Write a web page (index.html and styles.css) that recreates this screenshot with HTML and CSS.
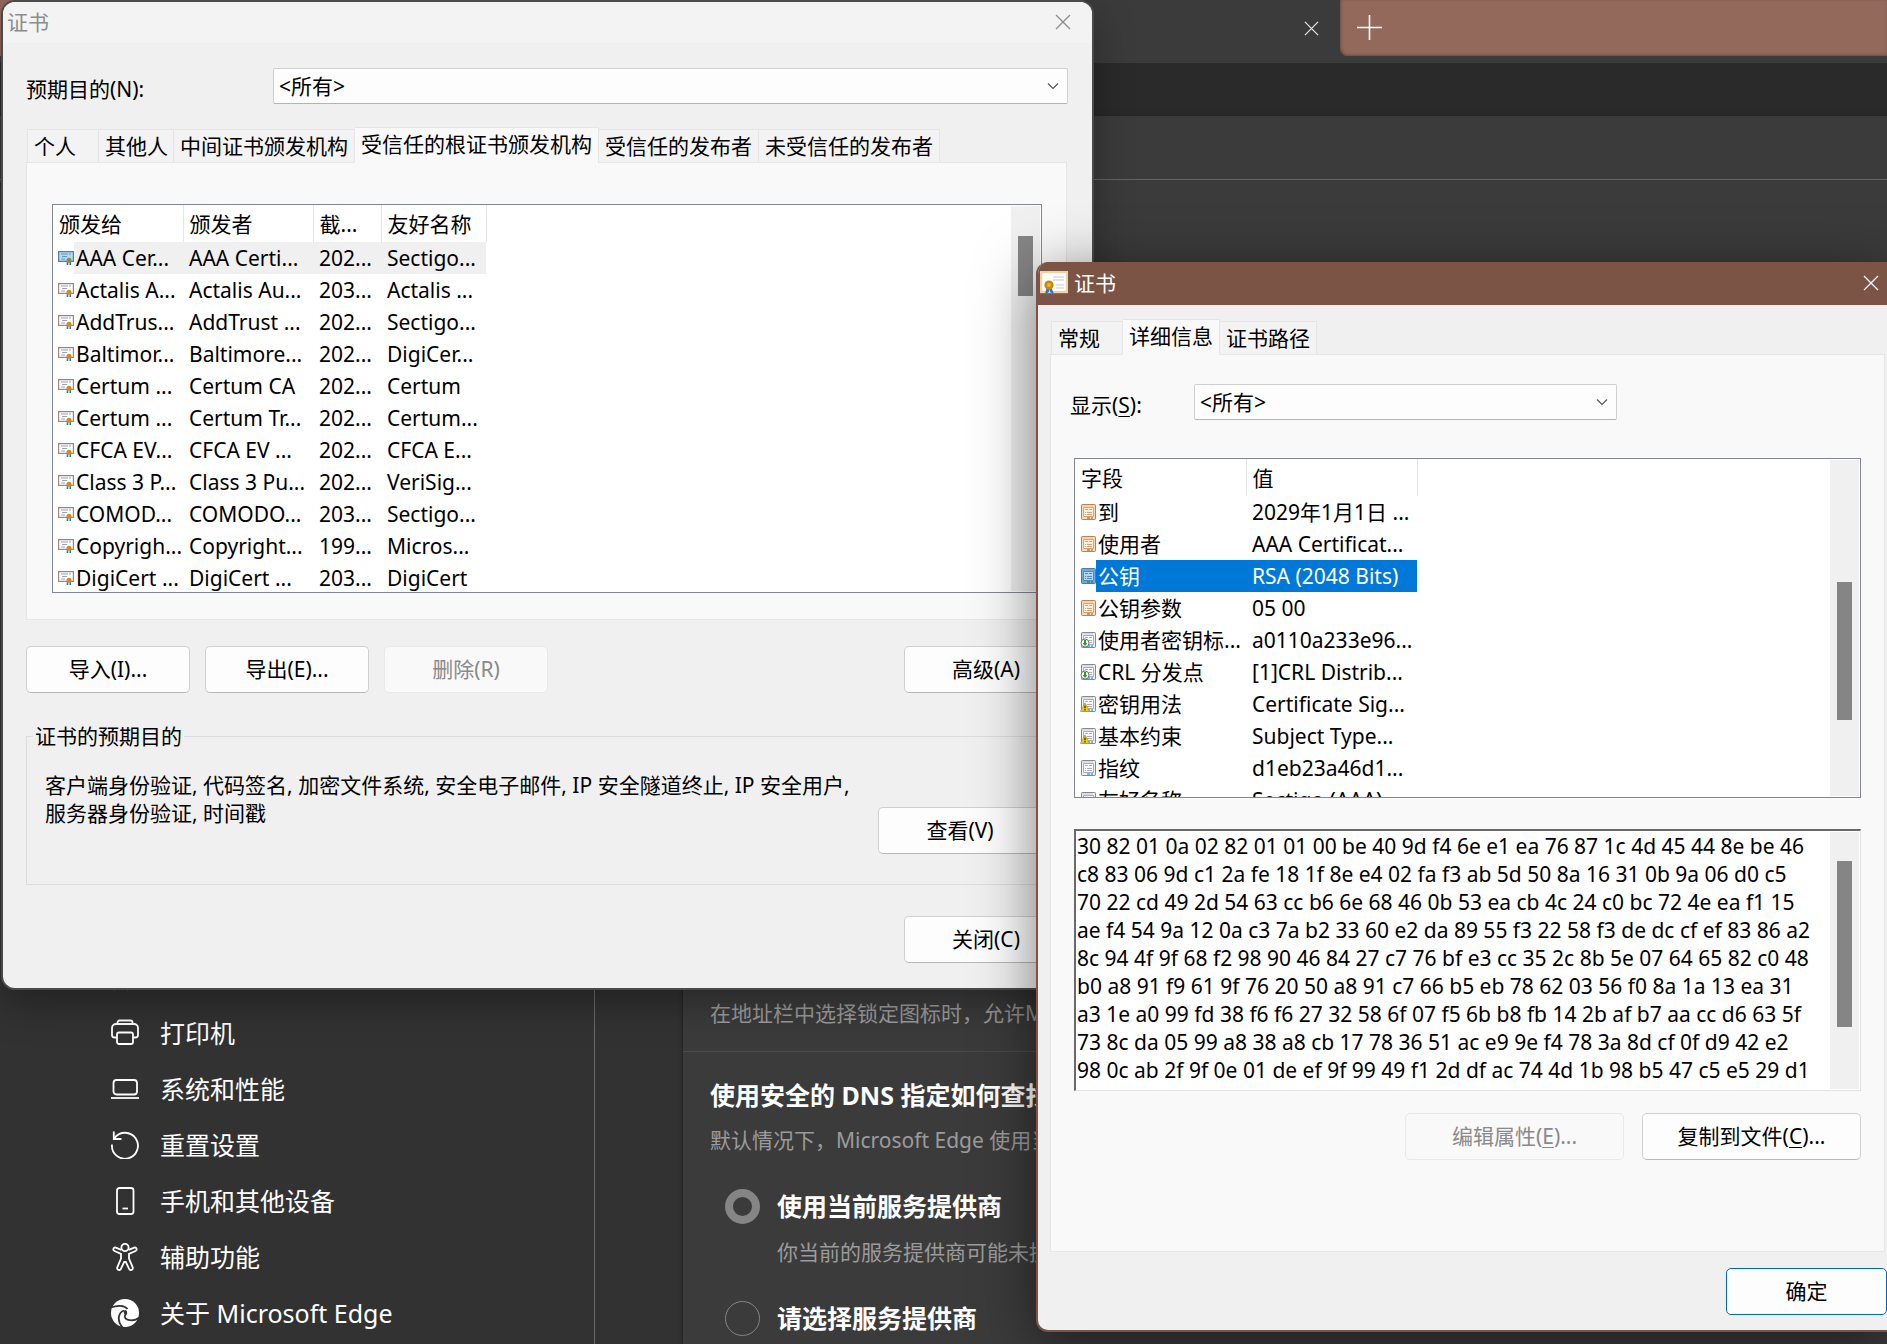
FILE: index.html
```html
<!DOCTYPE html>
<html lang="zh-CN">
<head>
<meta charset="utf-8">
<title>证书</title>
<link rel="stylesheet" href="styles.css">
</head>
<body>
<svg class="sprite" aria-hidden="true">
  <symbol id="i-close" viewBox="0 0 16 16"><path d="M1 1 15 15M15 1 1 15" fill="none" stroke="currentColor" stroke-width="1.3"/></symbol>
  <symbol id="i-chevron" viewBox="0 0 12 8"><path d="M1 1.500 6 6.500 11 1.500" fill="none" stroke="currentColor" stroke-width="1.200"/></symbol>
  <symbol id="i-cert" viewBox="0 0 16 14">
    <path d="M.6.6H15.400V10.400H.6Z" fill="#fff" stroke="#9a8a72" stroke-width="1.200"/>
    <path d="M3 3H10M11 3H13M4 5.500H9M3 8H7" stroke="#9a9ec8" stroke-width="1"/>
    <path d="M9.500 10.500V14M12.300 10.500V14" stroke="#3a6fd8" stroke-width="1.600"/>
    <circle cx="11" cy="9.200" r="2.500" fill="#c8920c"/>
  </symbol>
  <symbol id="i-cert-on" viewBox="0 0 16 14">
    <path d="M.6.6H15.400V10.400H.6Z" fill="#b3d9f6" stroke="#5a8198" stroke-width="1.200"/>
    <path d="M3 3H10M11 3H13M4 5.500H9M3 8H7" stroke="#6294c8" stroke-width="1"/>
    <path d="M9.500 10.500V14M12.300 10.500V14" stroke="#1f6bd0" stroke-width="1.600"/>
    <circle cx="11" cy="9.200" r="2.500" fill="#8d8f38"/>
  </symbol>
  <symbol id="i-field" viewBox="0 0 16 16">
    <rect x="1.500" y=".5" width="14" height="15" rx=".8" fill="var(--paper)" stroke="var(--edge)" stroke-width="1"/>
    <path d="M2 2H13" stroke="var(--bar)" stroke-width="1"/>
    <path d="M3.500 3.500H13.500V12.500H3.500Z" fill="#fff" fill-opacity=".5" stroke="var(--ink)" stroke-width="1"/>
    <path d="M5 5.500H8M9 5.500H12M5 8.500H6M7 8.500H12M5 10.500H6M7 10.500H12" stroke="var(--ink)" stroke-width="1"/>
    <path d="M7 14H10M11 14H13" stroke="var(--dot)" stroke-width="1.300"/>
  </symbol>
  <symbol id="i-down" viewBox="0 0 16 16"><use href="#i-field"/><circle cx="5" cy="11" r="4" fill="#fff" stroke="#6c7a70" stroke-width="1"/><path d="M5 8V12" stroke="#2e9a20" stroke-width="2"/><path d="M2.600 11H7.400L5 14Z" fill="#2e9a20"/></symbol>
  <symbol id="i-warn" viewBox="0 0 16 16"><use href="#i-field"/><path d="M5 7 9.500 15.400H.5Z" fill="#f2cf18" stroke="#b59a10" stroke-width=".8"/><path d="M5 9.500V12.300M5 13V14.400" stroke="#3a3000" stroke-width="1.300"/></symbol>
</svg>

<div class="browser">
  <header class="chrome">
    <div class="tabstrip">
      <div class="tab"><button class="tab-btn" aria-label="关闭标签页"><svg width="15" height="15"><use href="#i-close"/></svg></button></div>
      <div class="strip"><button class="tab-btn" aria-label="新建标签页"><svg width="25" height="25" viewBox="0 0 25 25"><path d="M12.500 0V25M0 12.500H25" stroke="#fff" stroke-width="1.600"/></svg></button></div>
    </div>
    <div class="toolbar"></div>
    <div class="bookmarks"></div>
  </header>
  <main class="settings">
    <nav class="sidebar">
      <a href="#lang"><svg class="nav-icon" viewBox="0 0 28 28"><path d="M3 27 10 6 17 27M5 19H15M17 4H27"/></svg>语言</a>
      <a href="#print"><svg class="nav-icon" viewBox="0 0 28 28"><path d="M6 18.500H3.500a2.500 2.500 0 0 1-2.500-2.500V9a4 4 0 0 1 4-4H23a4 4 0 0 1 4 4v7a2.500 2.500 0 0 1-2.500 2.500H22"/><path d="M6.500 5V3.500A2 2 0 0 1 8.500 1.500H19.500A2 2 0 0 1 21.500 3.500V5"/><rect x="6" y="13.500" width="16" height="11.500" rx="2"/></svg>打印机</a>
      <a href="#system"><svg class="nav-icon" viewBox="0 0 28 28"><rect x="2.500" y="5" width="23.500" height="14.500" rx="3"/><path d="M0 23H28"/></svg>系统和性能</a>
      <a href="#reset"><svg class="nav-icon" viewBox="0 0 28 28"><path d="M1 13.500A13 13 0 1 0 3.500 7"/><path d="M2.800 .5V8H10.500"/></svg>重置设置</a>
      <a href="#phone"><svg class="nav-icon" viewBox="0 0 28 28"><rect x="6" y="1" width="16.500" height="26" rx="2.500"/><path d="M11.500 21.500H17"/></svg>手机和其他设备</a>
      <a href="#access"><svg class="nav-icon" viewBox="0 0 28 28"><circle cx="14" cy="4.500" r="3.600"/><path d="M10.300 6.800 4.800 4.600C2.600 3.800 1.300 7 3.500 8L10 10.800V15.500L6.300 24.300C5.400 26.900 9 28 9.900 25.800L13.200 18.800H14.800L18.100 25.800C19 28 22.600 26.900 21.700 24.300L18 15.500V10.800L24.500 8C26.700 7 25.400 3.800 23.200 4.600L17.700 6.800"/></svg>辅助功能</a>
      <a href="#about"><svg class="nav-icon nav-logo" viewBox="0 0 28 28"><circle cx="14" cy="14" r="14" fill="#fff"/><path d="M0 8.500C6 6 13 6 16.500 10" class="swirl"/><path d="M11.500 28.500C5 21 8 13 13 11.500" class="swirl"/><path d="M28.500 18.500C22 23.500 14 21 13.800 17.500C14 15.500 15.500 14.500 15 12.500" class="swirl"/><path d="M13 11.500C16 10 17 13.500 15.500 15.500C14.500 17 12 14 13 11.500Z" fill="#323232"/></svg>关于 Microsoft Edge</a>
    </nav>
    <section class="card">
      <p class="desc first">在地址栏中选择锁定图标时，允许Microsoft Edge 保存信息</p>
      <div class="setting">
        <h2 class="heading">使用安全的 DNS 指定如何查找网站的网络地址</h2>
        <p class="desc">默认情况下，Microsoft Edge 使用当前的服务提供商</p>
        <div class="option"><input type="radio" name="dns" id="dns1" checked><label for="dns1">使用当前服务提供商</label></div>
        <p class="desc sub">你当前的服务提供商可能未提供安全的 DNS</p>
        <div class="option"><input type="radio" name="dns" id="dns2"><label for="dns2">请选择服务提供商</label></div>
      </div>
    </section>
  </main>
</div>

<section class="dialog store">
  <header class="titlebar"><span>证书</span><button class="close" aria-label="关闭"><svg width="16" height="16"><use href="#i-close"/></svg></button></header>
  <div class="store-body">
    <div class="filter">
      <label for="purpose">预期目的(N):</label>
      <div class="combo"><select id="purpose"><option>&lt;所有&gt;</option></select><svg width="12" height="8"><use href="#i-chevron"/></svg></div>
    </div>
    <div class="tabs">
      <button class="short">个人</button><button class="medium">其他人</button><button>中间证书颁发机构</button><button class="active">受信任的根证书颁发机构</button><button>受信任的发布者</button><button>未受信任的发布者</button>
    </div>
    <div class="panel store-panel">
      <div class="list store-list">
        <div class="view">
        <table>
          <colgroup><col class="c1"><col class="c2"><col class="c3"><col class="c4"></colgroup>
          <thead><tr><th>颁发给</th><th>颁发者</th><th>截...</th><th>友好名称</th></tr></thead>
          <tbody>
            <tr class="dim"><td><span class="item"><svg><use href="#i-cert-on"/></svg><span>AAA Cer...</span></span></td><td>AAA Certi...</td><td>202...</td><td>Sectigo...</td></tr>
            <tr><td><span class="item"><svg><use href="#i-cert"/></svg><span>Actalis A...</span></span></td><td>Actalis Au...</td><td>203...</td><td>Actalis ...</td></tr>
            <tr><td><span class="item"><svg><use href="#i-cert"/></svg><span>AddTrus...</span></span></td><td>AddTrust ...</td><td>202...</td><td>Sectigo...</td></tr>
            <tr><td><span class="item"><svg><use href="#i-cert"/></svg><span>Baltimor...</span></span></td><td>Baltimore...</td><td>202...</td><td>DigiCer...</td></tr>
            <tr><td><span class="item"><svg><use href="#i-cert"/></svg><span>Certum ...</span></span></td><td>Certum CA</td><td>202...</td><td>Certum</td></tr>
            <tr><td><span class="item"><svg><use href="#i-cert"/></svg><span>Certum ...</span></span></td><td>Certum Tr...</td><td>202...</td><td>Certum...</td></tr>
            <tr><td><span class="item"><svg><use href="#i-cert"/></svg><span>CFCA EV...</span></span></td><td>CFCA EV ...</td><td>202...</td><td>CFCA E...</td></tr>
            <tr><td><span class="item"><svg><use href="#i-cert"/></svg><span>Class 3 P...</span></span></td><td>Class 3 Pu...</td><td>202...</td><td>VeriSig...</td></tr>
            <tr><td><span class="item"><svg><use href="#i-cert"/></svg><span>COMOD...</span></span></td><td>COMODO...</td><td>203...</td><td>Sectigo...</td></tr>
            <tr><td><span class="item"><svg><use href="#i-cert"/></svg><span>Copyrigh...</span></span></td><td>Copyright...</td><td>199...</td><td>Micros...</td></tr>
            <tr><td><span class="item"><svg><use href="#i-cert"/></svg><span>DigiCert ...</span></span></td><td>DigiCert ...</td><td>203...</td><td>DigiCert</td></tr>
          </tbody>
        </table>
        </div>
        <div class="scroll"><div class="thumb t1"></div></div>
      </div>
    </div>
    <div class="actions">
      <button class="btn">导入(I)...</button><button class="btn">导出(E)...</button><button class="btn" disabled>删除(R)</button><button class="btn end">高级(A)</button>
    </div>
    <fieldset class="group">
      <legend>证书的预期目的</legend>
      <p>客户端身份验证, 代码签名, 加密文件系统, 安全电子邮件, IP 安全隧道终止, IP 安全用户, 服务器身份验证, 时间戳</p>
      <button class="btn">查看(V)</button>
    </fieldset>
    <div class="actions last"><button class="btn end">关闭(C)</button></div>
  </div>
</section>

<section class="dialog detail">
  <header class="titlebar">
    <svg class="app-icon" width="28" height="24" viewBox="0 0 28 24"><rect x="1" y="1" width="26" height="20" fill="#fff" stroke="#efd3a4" stroke-width="2.400"/><path d="M13 6H24M13 9H24M16 14H24M16 17H24" stroke="#dcdcdc" stroke-width="1.600"/><path d="M6.500 17 5 23 8.500 21.500 9.500 18ZM11.500 17 14 23 10.500 21.500 9 18Z" fill="#2f6fe0"/><circle cx="9" cy="14" r="4.600" fill="#c48a08"/><circle cx="9" cy="14" r="2" fill="#e8b830"/></svg>
    <span>证书</span><button class="close" aria-label="关闭"><svg width="16" height="16"><use href="#i-close"/></svg></button>
  </header>
  <div class="detail-body">
    <div class="tabs">
      <button class="short">常规</button><button class="active">详细信息</button><button>证书路径</button>
    </div>
    <div class="panel detail-panel">
      <div class="filter">
        <label for="show">显示(<u>S</u>):</label>
        <div class="combo"><select id="show"><option>&lt;所有&gt;</option></select><svg width="12" height="8"><use href="#i-chevron"/></svg></div>
      </div>
      <div class="list field-list">
        <div class="view">
        <table>
          <colgroup><col class="f1"><col class="f2"></colgroup>
          <thead><tr><th>字段</th><th>值</th></tr></thead>
          <tbody>
            <tr><td><span class="item tan"><svg><use href="#i-field"/></svg><span>到</span></span></td><td>2029年1月1日 ...</td></tr>
            <tr><td><span class="item tan"><svg><use href="#i-field"/></svg><span>使用者</span></span></td><td>AAA Certificat...</td></tr>
            <tr class="selected"><td><span class="item blue"><svg><use href="#i-field"/></svg><span>公钥</span></span></td><td>RSA (2048 Bits)</td></tr>
            <tr><td><span class="item tan"><svg><use href="#i-field"/></svg><span>公钥参数</span></span></td><td>05 00</td></tr>
            <tr><td><span class="item"><svg><use href="#i-down"/></svg><span>使用者密钥标...</span></span></td><td>a0110a233e96...</td></tr>
            <tr><td><span class="item"><svg><use href="#i-down"/></svg><span>CRL 分发点</span></span></td><td>[1]CRL Distrib...</td></tr>
            <tr><td><span class="item"><svg><use href="#i-warn"/></svg><span>密钥用法</span></span></td><td>Certificate Sig...</td></tr>
            <tr><td><span class="item"><svg><use href="#i-warn"/></svg><span>基本约束</span></span></td><td>Subject Type...</td></tr>
            <tr><td><span class="item"><svg><use href="#i-field"/></svg><span>指纹</span></span></td><td>d1eb23a46d1...</td></tr>
            <tr><td><span class="item"><svg><use href="#i-field"/></svg><span>友好名称</span></span></td><td>Sectigo (AAA)</td></tr>
          </tbody>
        </table>
        </div>
        <div class="scroll"><div class="thumb t2"></div></div>
      </div>
      <div class="hex">
        <textarea readonly aria-label="值" wrap="off">30 82 01 0a 02 82 01 01 00 be 40 9d f4 6e e1 ea 76 87 1c 4d 45 44 8e be 46
c8 83 06 9d c1 2a fe 18 1f 8e e4 02 fa f3 ab 5d 50 8a 16 31 0b 9a 06 d0 c5
70 22 cd 49 2d 54 63 cc b6 6e 68 46 0b 53 ea cb 4c 24 c0 bc 72 4e ea f1 15
ae f4 54 9a 12 0a c3 7a b2 33 60 e2 da 89 55 f3 22 58 f3 de dc cf ef 83 86 a2
8c 94 4f 9f 68 f2 98 90 46 84 27 c7 76 bf e3 cc 35 2c 8b 5e 07 64 65 82 c0 48
b0 a8 91 f9 61 9f 76 20 50 a8 91 c7 66 b5 eb 78 62 03 56 f0 8a 1a 13 ea 31
a3 1e a0 99 fd 38 f6 f6 27 32 58 6f 07 f5 6b b8 fb 14 2b af b7 aa cc d6 63 5f
73 8c da 05 99 a8 38 a8 cb 17 78 36 51 ac e9 9e f4 78 3a 8d cf 0f d9 42 e2
98 0c ab 2f 9f 0e 01 de ef 9f 99 49 f1 2d df ac 74 4d 1b 98 b5 47 c5 e5 29 d1
f9 90 18 c7 62 9c be 83 c7 26 7b 3e 8a 25 c7 c0 dd 9d e6 35 68 10 20 9d 8f</textarea>
        <div class="scroll"><div class="thumb t3"></div></div>
      </div>
      <div class="actions right"><button class="btn wide" disabled>编辑属性(<u>E</u>)...</button><button class="btn wide">复制到文件(<u>C</u>)...</button></div>
    </div>
    <div class="actions ok"><button class="btn primary">确定</button></div>
  </div>
</section>
</body>
</html>
```
FILE: styles.css
```css
* { box-sizing: border-box; }
body {
  margin: 0;
  height: 100vh;
  overflow: hidden;
  position: relative;
  background: #323232;
  font-family: "Noto Sans", "Noto Sans CJK SC", sans-serif;
  font-size: 21px;
  line-height: 28px;
  color: #000;
}
p, h2 { margin: 0; }
button { font: inherit; color: inherit; padding: 0; cursor: default; }
u { text-underline-offset: 3px; text-decoration-thickness: 1px; }
.sprite { position: absolute; width: 0; height: 0; }

/* browser behind the dialogs */
.browser { height: 100vh; display: flex; flex-direction: column; }
.tabstrip { display: flex; height: 63px; background: #3b3b3b; }
.tab { flex: 0 0 1340px; display: flex; justify-content: flex-end; padding: 16px 21px 0 0; background: linear-gradient(90deg, #93695c 924px, #3b3b3b 924px) no-repeat 0 0 / 100% 56px; }
.strip { flex: 1; height: 56px; padding: 15px 17px; background: #93695c; border-radius: 0 0 0 8px; box-shadow: inset 1px -1px 3px #6b4c43; }
.tab-btn { display: block; height: 25px; background: none; border: 0; color: #e6e6e6; }
.tab-btn svg { display: block; }
.toolbar { height: 53px; background: #2a2a2a; }
.bookmarks { height: 67px; background: #3b3b3b; border-bottom: 3px solid #3b3b3b; box-shadow: inset 0 -1px #656565, 0 2px 6px #1c1c1c; }
.settings { flex: 1; min-height: 0; display: flex; overflow: hidden; }
.sidebar {
  flex: 0 0 595px;
  display: flex; flex-direction: column; justify-content: flex-end;
  padding: 0 0 3px 111px;
  border-right: 1px solid #6a6a6a;
}
.sidebar a { display: flex; align-items: center; gap: 21px; flex: 0 0 56px; color: #fff; font-size: 25px; text-decoration: none; }
.nav-icon { width: 28px; height: 28px; fill: none; stroke: #fff; stroke-width: 1.8; }
.nav-logo { stroke: none; }
.swirl { fill: none; stroke: #323232; stroke-width: 1.8; }
.card {
  flex: 1; min-width: 0; margin-left: 88px;
  display: flex; flex-direction: column; justify-content: flex-end;
  background: #3b3b3b; box-shadow: 0 0 4px #1c1c1c; white-space: nowrap;
}
.desc { color: #9b9b9b; }
.desc.first { padding: 0 27px 24px; }
.setting { border-top: 1px solid #4a4a4a; padding: 27px 27px 8px; }
.heading { font-size: 25px; line-height: 32px; color: #fff; margin-bottom: 15px; }
.option { display: flex; align-items: center; gap: 17px; height: 36px; margin: 34px 0 14px 15px; font-size: 25px; font-weight: 700; color: #fff; }
.sub { padding-left: 67px; }
.setting .option:last-child { margin-bottom: 0; }
.option input { appearance: none; width: 35px; height: 35px; margin: 0; border: 1px solid #858585; border-radius: 50%; }
.option input:checked { border: 8px solid #858585; }

/* dialogs */
.dialog { position: absolute; background: #f0f0f0; overflow: hidden; border-radius: 12px; }
.store { left: 3px; top: 2px; width: 1089px; box-shadow: 0 0 0 2px #4a4a4a, 0 14px 40px rgba(0, 0, 0, .35); }
.detail { left: 1036px; right: 0; top: 262px; border: 2px solid #7b5446; border-width: 0 0 2px 2px; border-radius: 12px 0 0 12px; box-shadow: 0 12px 60px rgba(0, 0, 0, .5); }
.titlebar { display: flex; align-items: center; height: 41px; background: #f3f3f3; color: #8c8c8c; padding: 0 21px 2px 4px; }
.close { display: block; margin-left: auto; border: 0; background: none; color: inherit; }
.close svg { display: block; }
.detail .titlebar { height: 43px; background: #7b5446; color: #fff; padding: 0 8px 1px 2px; gap: 6px; }
.store-body { padding: 25px 24px 25px 23px; }
.detail-body { padding: 14px 0 15px 12px; }

.filter { display: flex; align-items: center; }
.store .filter label { width: 247px; padding-top: 6px; }
.combo { flex: 1; display: grid; align-items: center; }
.combo > * { grid-area: 1 / 1; }
.combo select { appearance: none; height: 36px; padding: 0 5px; background: #fdfdfd; border: 1px solid #d0d0d0; border-bottom-color: #b4b4b4; border-radius: 2px; font: inherit; color: #000; }
.combo svg { justify-self: end; margin-right: 9px; color: #555; pointer-events: none; }

.tabs { display: flex; align-items: flex-end; position: relative; }
.tabs button { height: 33px; padding: 0 6px; border: 1px solid #e5e5e5; border-width: 1px 1px 0 0; background: #f3f3f3; white-space: nowrap; text-align: left; line-height: 30px; }
.tabs button:first-child { margin-left: 1px; border-left-width: 1px; }
.tabs .short { width: 72px; }
.tabs .medium { width: 75px; }
.tabs .active { height: 36px; margin-bottom: -1px; padding: 0 6px 4px; background: #f9f9f9; }
.store .tabs { margin-top: 23px; }
.panel { background: #f9f9f9; border: 1px solid #e5e5e5; }
.store-panel { padding: 41px 24px 26px 25px; margin-right: 1px; }

.list { display: flex; background: #fff; border: 1px solid #828790; }
.view { flex: 1; min-width: 0; overflow: hidden; }
.store-list { height: 389px; }
.field-list { height: 340px; margin-top: 38px; }
table { table-layout: fixed; border-collapse: collapse; width: 0; }
.c1 { width: 130px; } .c2 { width: 130px; } .c3 { width: 68px; } .c4 { width: 105px; }
.f1 { width: 171px; } .f2 { width: 171px; }
th { height: 37px; padding: 0 0 0 6px; border-right: 1px solid #e5e5e5; text-align: left; font-weight: 400; white-space: nowrap; }
td { height: 32px; padding: 0 0 0 6px; white-space: nowrap; overflow: hidden; }
td:first-child { padding-left: 5px; }
.item { display: flex; align-items: center; height: 32px; }
.item svg { flex: none; width: 16px; height: 14px; --paper: #eef0f6; --edge: #84878e; --bar: #c9ccd4; --ink: #a9abc0; --dot: #22b8e8; }
.item > span { flex: 1; height: 32px; line-height: 32px; padding-left: 2px; }
.field-list .item svg { width: 16px; height: 16px; }
.item.tan svg { --paper: #fbdcb8; --edge: #b58458; --bar: #f7c692; --ink: #d9a878; --dot: #b58458; }
.item.blue svg { --paper: #6ea9d4; --edge: #4a7ea4; --bar: #6fa8d4; --ink: #4a8ec4; --dot: #3f78a0; }
.dim .item > span, .dim td + td { background: #f0f0f0; }
.selected .item > span, .selected td + td { background: #0078d7; color: #fff; }
.scroll { flex: 0 0 29px; margin: 1px; background: #f0f0f0; }
.thumb { width: 15px; margin-left: 7px; background: #858585; }
.t1 { height: 60px; margin-top: 30px; }
.t2 { height: 138px; margin-top: 122px; }
.t3 { height: 166px; margin-top: 29px; }

.actions { display: flex; gap: 15px; margin-top: 26px; }
.btn { width: 164px; height: 47px; padding-bottom: 2px; background: #fdfdfd; border: 1px solid #d0d0d0; border-bottom-color: #b8b8b8; border-radius: 5px; }
.btn:disabled { background: #f9f9f9; border-color: #e8e8e8; color: #8a8a8a; }
.btn.end { margin-left: auto; }
.btn.wide { width: 219px; }
.group { display: flex; flex-direction: column; min-width: 0; height: 163px; margin: 29px 0 0; padding: 21px 25px 30px 18px; border: 1px solid #dcdcdc; }
.group legend { margin-left: -12px; padding: 0 2px; }
.group p { width: 820px; }
.group .btn { align-self: flex-end; flex: none; margin-top: -20px; }
.actions.last { margin-top: 31px; }

.detail-panel { padding: 29px 23px 91px 23px; margin-right: 2px; }
.detail .filter label { width: 124px; padding-top: 6px; margin-left: -4px; }
.detail .filter .combo { flex: 0 0 423px; }
.hex { display: flex; height: 262px; margin-top: 31px; background: #fff; border: 2px solid #696969; border-right: 1px solid #e3e3e3; border-bottom: 1px solid #e3e3e3; }
.hex textarea { flex: 1; min-width: 0; margin: 0; padding: 1px 0 0 1px; border: 0; resize: none; overflow: hidden; background: #fff; color: #000; font: inherit; line-height: 28px; outline: 0; }
.actions.right { justify-content: flex-end; gap: 18px; margin-top: 22px; }
.actions.ok { justify-content: flex-end; margin-top: 16px; }
.primary { border-color: #0067c0; }
.actions .primary { width: 161px; }
```
